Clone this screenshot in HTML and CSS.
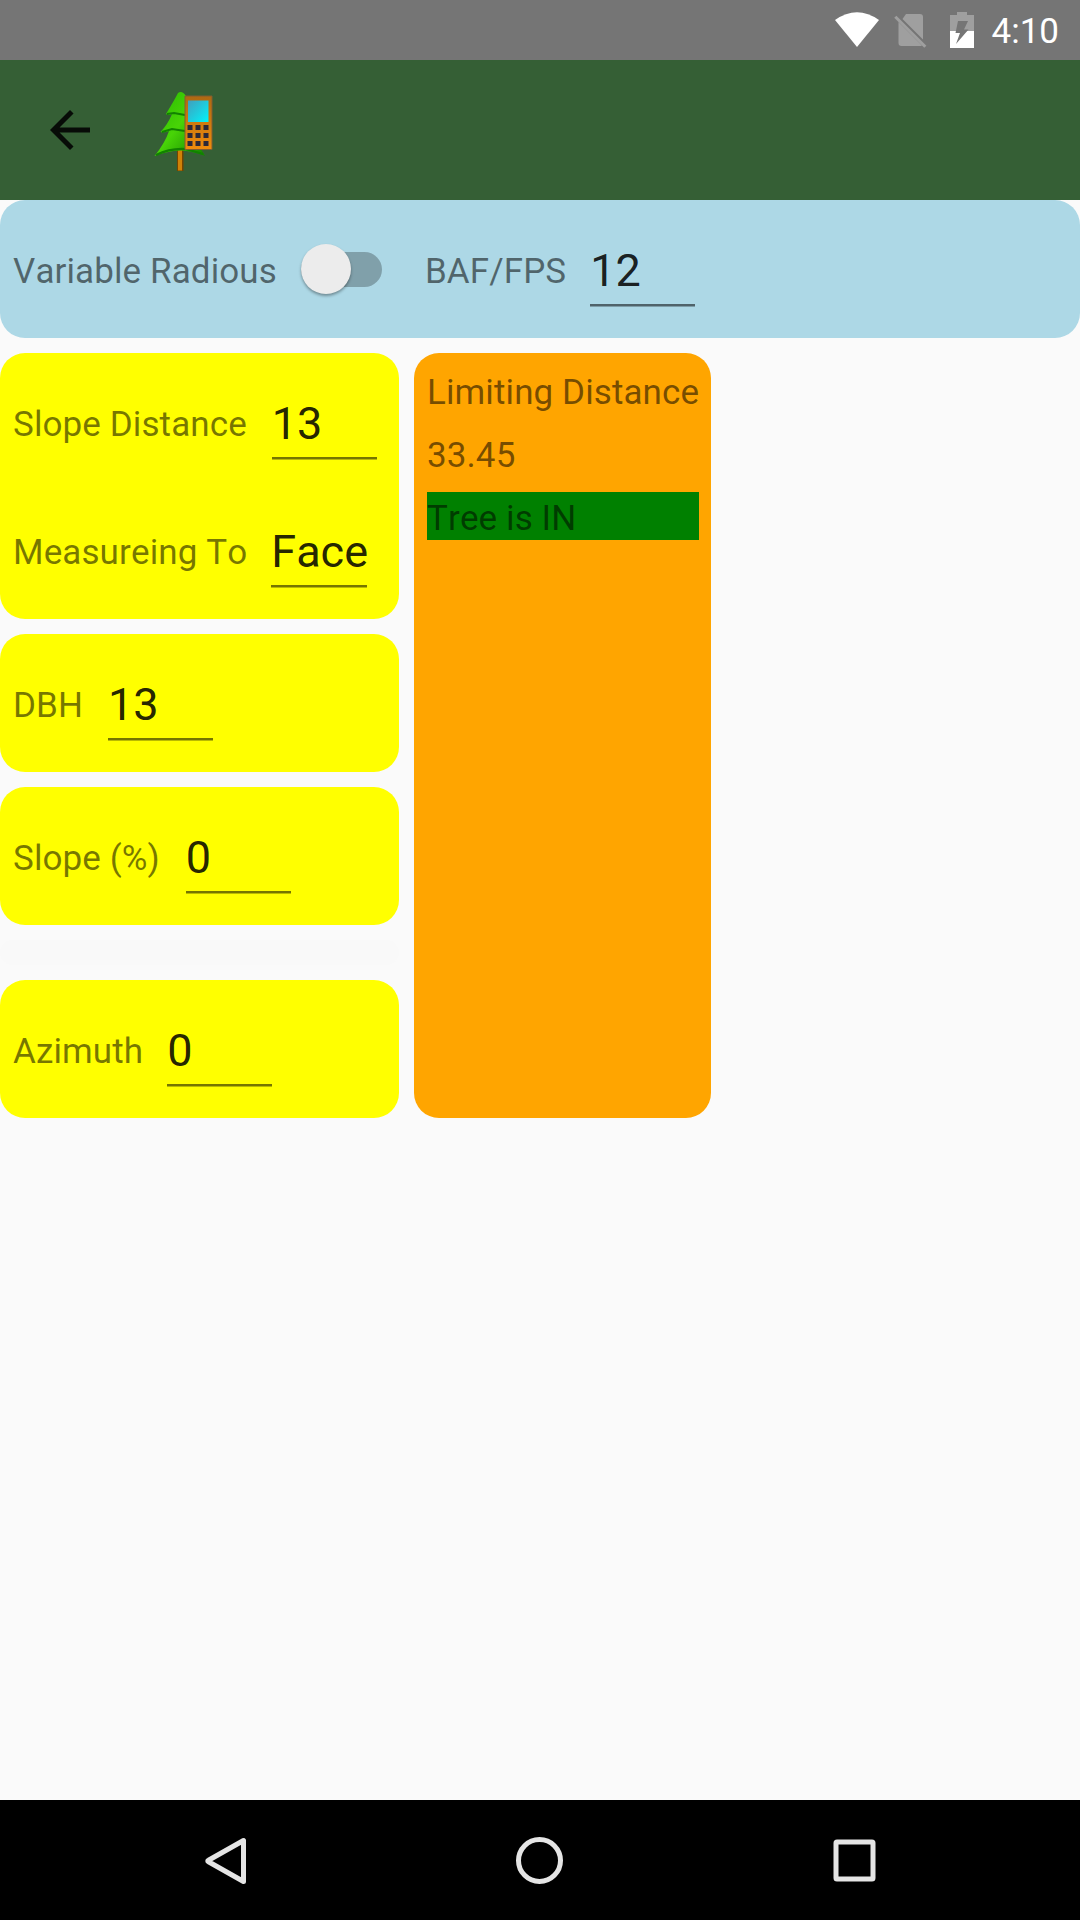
FILE: index.html
```html
<!DOCTYPE html>
<html lang="en">
<head>
<meta charset="utf-8">
<title>Limiting Distance</title>
<link rel="stylesheet" href="styles.css">
</head>
<body>
<div class="screen">
  <div class="status-bar">
    <svg class="wifi" width="44" height="35" viewBox="0 0 44 35"><path d="M0 8Q22 -7.500 44 8L22 35Z" fill="#fff"/></svg>
    <svg class="sim" width="33" height="34" viewBox="0 0 33 34"><path d="M12 0H26Q29 0 29 3V25.500L8.500 5ZM4.500 8L28 31.500Q27 32 26 32H7.500Q4.500 32 4.500 29Z" fill="#9f9f9f"/><path d="M1.300 2.700L31.300 32.700" stroke="#9f9f9f" stroke-width="3"/></svg>
    <svg class="battery" width="24" height="36" viewBox="0 0 24 36"><path d="M7 0H17V3H24V19H0V3H7Z" fill="#9f9f9f"/><path d="M0 19H24V36H0Z" fill="#fff"/><path d="M8 9H18L14 17.500H18.500L6 32L10 21H5.500Z" fill="#757575"/></svg>
    <span class="clock">4:10</span>
  </div>
  <header class="toolbar">
    <svg class="back" width="60" height="60" viewBox="0 0 24 24"><path d="M20 11H7.830l5.590-5.590L12 4l-8 8 8 8 1.410-1.410L7.830 13H20v-2z"/></svg>
    <svg class="logo" width="60" height="80" viewBox="0 0 60 80">
      <defs>
        <linearGradient id="leaf" x1="0" y1="0" x2="1" y2="1"><stop offset="0" stop-color="#27b800"/><stop offset=".5" stop-color="#48d407"/><stop offset="1" stop-color="#128300"/></linearGradient>
        <linearGradient id="glass" x1="0" y1="0" x2="1" y2="1"><stop offset="0" stop-color="#419fbd"/><stop offset="1" stop-color="#00f4fa"/></linearGradient>
        <linearGradient id="case" x1="0" y1="0" x2="0" y2="1"><stop offset="0" stop-color="#ad6812"/><stop offset="1" stop-color="#f08c0c"/></linearGradient>
      </defs>
      <path d="M27 57H33.500V80H27Z" fill="#744500"/><path d="M28 57H32V79.500H28Z" fill="#cf8207"/>
      <path d="M28 2Q25 8 16 23Q19 25 22 23Q18 33 10.500 41Q15 42 19 40Q15 52 4.500 65Q17 60 30 59.500Q43 60 55 65Q52 59 45 50L36 5Q32 -1 28 2Z" fill="url(#leaf)"/>
      <path d="M17 23L24 22L35 24M12 41L22 38L35 40M6 64Q20 57 36 58L53 63" fill="none" stroke="#118200" stroke-width="2"/>
      <path d="M35 5H62V58.500H35Z" fill="url(#case)" stroke="#805c30"/>
      <path d="M38 9.500H58.500V31H38Z" fill="url(#glass)"/>
      <path d="M37.500 34h5v5h-5zM45.500 34h5v5h-5zM53.500 34h5v5h-5zM37.500 42h5v5h-5zM45.500 42h5v5h-5zM53.500 42h5v5h-5zM37.500 50h5v5h-5zM45.500 50h5v5h-5zM53.500 50h5v5h-5z" fill="#2c2938"/>
    </svg>
  </header>
  <main class="content">
    <section class="card card-blue">
      <div class="row">
        <span class="label">Variable Radious</span>
        <span class="switch"><span class="thumb"></span></span>
        <span class="label">BAF/FPS</span>
        <span class="entry factor">12</span>
      </div>
    </section>
    <div class="columns">
      <div class="inputs">
        <section class="card">
          <div class="row"><span class="label">Slope Distance</span><span class="entry">13</span></div>
          <div class="row"><span class="label">Measureing To</span><span class="entry picker">Face</span></div>
        </section>
        <section class="card"><div class="row"><span class="label">DBH</span><span class="entry">13</span></div></section>
        <section class="card"><div class="row"><span class="label">Slope (%)</span><span class="entry slope">0</span></div></section>
        <div class="spacer"></div>
        <section class="card"><div class="row"><span class="label">Azimuth</span><span class="entry azimuth">0</span></div></section>
      </div>
      <section class="result">
        <span class="result-line">Limiting Distance</span>
        <span class="result-line">33.45</span>
        <span class="result-line verdict">Tree is IN</span>
      </section>
    </div>
  </main>
  <nav class="nav-bar">
    <svg width="60" height="60" viewBox="0 0 60 60"><path d="M48.500 9.500V50.500L13.500 30.800Q12 30 13.500 29.200Z"/></svg>
    <svg width="60" height="60" viewBox="0 0 60 60"><circle cx="29.500" cy="29.500" r="21"/></svg>
    <svg width="60" height="60" viewBox="0 0 60 60"><rect x="12" y="11" width="37" height="37" rx="1"/></svg>
  </nav>
</div>
</body>
</html>
```

FILE: styles.css
```css
* { box-sizing: border-box; }
body { margin: 0; font-family: Roboto, "Liberation Sans", sans-serif; font-kerning: none; }
.screen { width: 1080px; height: 1920px; display: flex; flex-direction: column; background: #fafafa; }

.status-bar { height: 60px; background: #757575; display: flex; align-items: flex-start; justify-content: flex-end; padding: 12px 21px 0 0; color: #fff; }
.sim { margin: 2px 0 0 15px; }
.battery { margin-left: 23px; }
.clock { margin-left: 18px; font-size: 35px; line-height: 40px; }

.toolbar { height: 140px; background: #355f35; display: flex; align-items: center; padding-left: 40px; }
.back { fill: rgba(0, 0, 0, .87); }
.logo { margin: 1px 0 0 50px; overflow: visible; }

.content { flex: 1; display: flex; flex-direction: column; gap: 15px; }
.card { border-radius: 25px; background: #ff0; padding: 5px 13px; }
.card-blue { background: #add8e6; }
.row { height: 128px; display: flex; align-items: center; }
.label { font-size: 35px; line-height: 42px; padding-top: 6px; letter-spacing: .1px; color: rgba(0, 0, 0, .54); white-space: nowrap; }
.entry { width: 105px; height: 62px; margin: 11px 0 0 25px; font-size: 45px; line-height: 53px; color: rgba(0, 0, 0, .87); border-bottom: 2px solid rgba(0, 0, 0, .54); box-shadow: 0 1px rgba(0, 0, 0, .27); }
.factor, .azimuth { margin-left: 24px; }
.slope { margin-left: 26px; }
.picker { width: 96px; margin-left: 24px; }
.switch { width: 81px; height: 35px; margin: 0 43px 0 24px; border-radius: 18px; background: rgba(0, 0, 0, .26); display: flex; align-items: center; }
.thumb { flex: none; width: 50px; height: 50px; border-radius: 50%; background: #ececec; box-shadow: 0 2px 3px rgba(0, 0, 0, .35); }

.columns { display: flex; gap: 15px; align-self: flex-start; }
.inputs { width: 399px; display: flex; flex-direction: column; gap: 15px; }
.spacer { height: 25px; border-radius: 25px; background: #f9f9f9; }
.result { width: 297px; border-radius: 25px; background: #ffa500; padding: 13px 12px 13px 13px; display: flex; flex-direction: column; gap: 15px; }
.result-line { font-size: 35px; line-height: 42px; padding-top: 6px; letter-spacing: .1px; color: rgba(0, 0, 0, .54); white-space: nowrap; }
.verdict { background: #008000; }

.nav-bar { height: 120px; background: #000; display: flex; align-items: center; justify-content: space-between; padding: 1px 196px 0 195px; }
.nav-bar svg { fill: none; stroke: #e5e5e5; stroke-width: 5; stroke-linejoin: round; }
```
